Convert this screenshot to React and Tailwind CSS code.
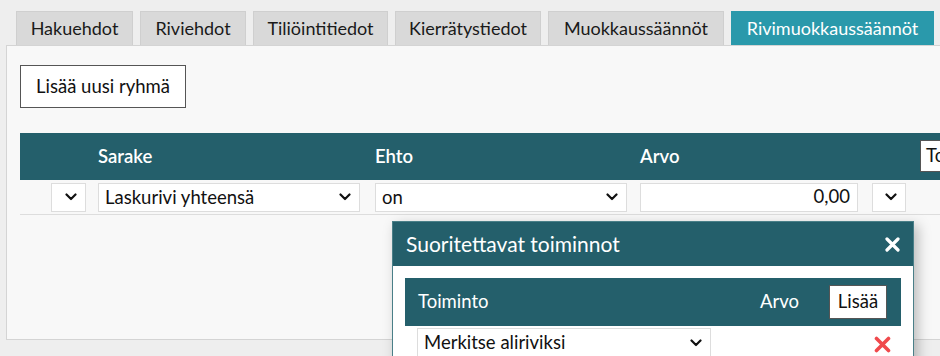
import React from "react";

const Chev = () => (
  <svg width="12" height="8" viewBox="0 0 12 8" className="shrink-0">
    <polyline points="1.5,1.5 6,6 10.5,1.5" fill="none" stroke="#111" strokeWidth="2.2" strokeLinecap="round" strokeLinejoin="round" />
  </svg>
);

const Select = ({ w, text, cls = "" }) => (
  <div className={`flex items-center justify-between h-[29px] bg-white border border-[#dddddd] pl-[6px] pr-[8px] ${w} ${cls}`}>
    <span className="text-[18.5px] text-[#111] leading-none">{text}</span>
    <Chev />
  </div>
);

const tabs = [
  ["Hakuehdot", "w-[117px]"],
  ["Riviehdot", "w-[106px]"],
  ["Tiliöintitiedot", "w-[135px]"],
  ["Kierrätystiedot", "w-[146px]"],
  ["Muokkaussäännöt", "w-[176px]"],
];

export default function App() {
  return (
    <div className="relative w-[940px] h-[356px] overflow-hidden bg-[#eeeeee]" style={{ fontFamily: "Lato, 'Open Sans', sans-serif" }}>
      <div className="flex items-end gap-[7px] pl-[16px] pt-[11px] h-[45px]">
        {tabs.map(([t, w]) => (
          <div key={t} className={`${w} h-[34px] flex items-center justify-center bg-[#d9d9d9] border border-b-0 border-[#cfcfcf] text-[18px] text-[#1a1a1a]`}>
            {t}
          </div>
        ))}
        <div className="w-[203px] h-[34px] flex items-center justify-center bg-[#2a99ab] text-[18px] text-white">
          Rivimuokkaussäännöt
        </div>
      </div>
      <div className="ml-[6px] w-[940px] h-[295px] bg-[#f8f8f8] border border-[#d4d4d4] pl-[13px] pt-[19px]">
        <div className="w-[166px] h-[43px] flex items-center justify-center bg-white border border-[#555] text-[18.5px] text-[#111]">
          Lisää uusi ryhmä
        </div>
        <div className="mt-[25px] w-[930px]">
          <div className="relative h-[47px] bg-[#245f6b] flex items-center text-white text-[18.5px] font-semibold">
            <span className="absolute left-[78px]">Sarake</span>
            <span className="absolute left-[355px]">Ehto</span>
            <span className="absolute left-[620px]">Arvo</span>
            <div className="absolute left-[900px] top-[7px] h-[32px] w-[40px] bg-white border border-[#555] text-[#111] font-normal flex items-center pl-[5px]">To</div>
          </div>
          <div className="h-[35px] flex items-center border-b border-[#dddddd]">
            <Select w="w-[35px]" text="" cls="ml-[31px]" />
            <Select w="w-[262px]" text="Laskurivi yhteensä" cls="ml-[12px]" />
            <Select w="w-[252px]" text="on" cls="ml-[15px]" />
            <div className="ml-[13px] w-[218px] h-[29px] bg-white border border-[#dddddd] flex items-center justify-end pr-[7px] text-[18.5px] text-[#111]">0,00</div>
            <Select w="w-[34px]" text="" cls="ml-[14px]" />
          </div>
        </div>
      </div>

      <div className="absolute left-[392px] top-[221px] w-[522px] h-[160px] bg-white border border-[#4a7f88] shadow-[4px_4px_12px_rgba(0,0,0,0.25)]">
        <div className="h-[44px] bg-[#245f6b] flex items-center justify-between pl-[13px] pr-[13px]">
          <span className="text-white text-[21px]">Suoritettavat toiminnot</span>
          <svg width="15" height="15" viewBox="0 0 15 15">
            <path d="M2 2 L13 13 M13 2 L2 13" stroke="white" strokeWidth="3.2" strokeLinecap="round" />
          </svg>
        </div>
        <div className="px-[12px] pt-[12px]">
          <div className="relative h-[48px] bg-[#245f6b] flex items-center text-white text-[18.5px]">
            <span className="absolute left-[13px]">Toiminto</span>
            <span className="absolute left-[355px]">Arvo</span>
            <div className="absolute left-[424px] top-[7px] w-[58px] h-[34px] bg-white border border-[#555] text-[#111] flex items-center justify-center">Lisää</div>
          </div>
          <div className="flex items-center justify-between pt-[2px]">
            <Select w="w-[294px]" text="Merkitse aliriviksi" cls="ml-[12px]" />
            <svg width="17" height="17" viewBox="0 0 17 17" className="mr-[10px] mt-[4px]">
              <path d="M2.5 2.5 L14.5 14.5 M14.5 2.5 L2.5 14.5" stroke="#f0494c" strokeWidth="3.6" strokeLinecap="round" />
            </svg>
          </div>
        </div>
      </div>
    </div>
  );
}
